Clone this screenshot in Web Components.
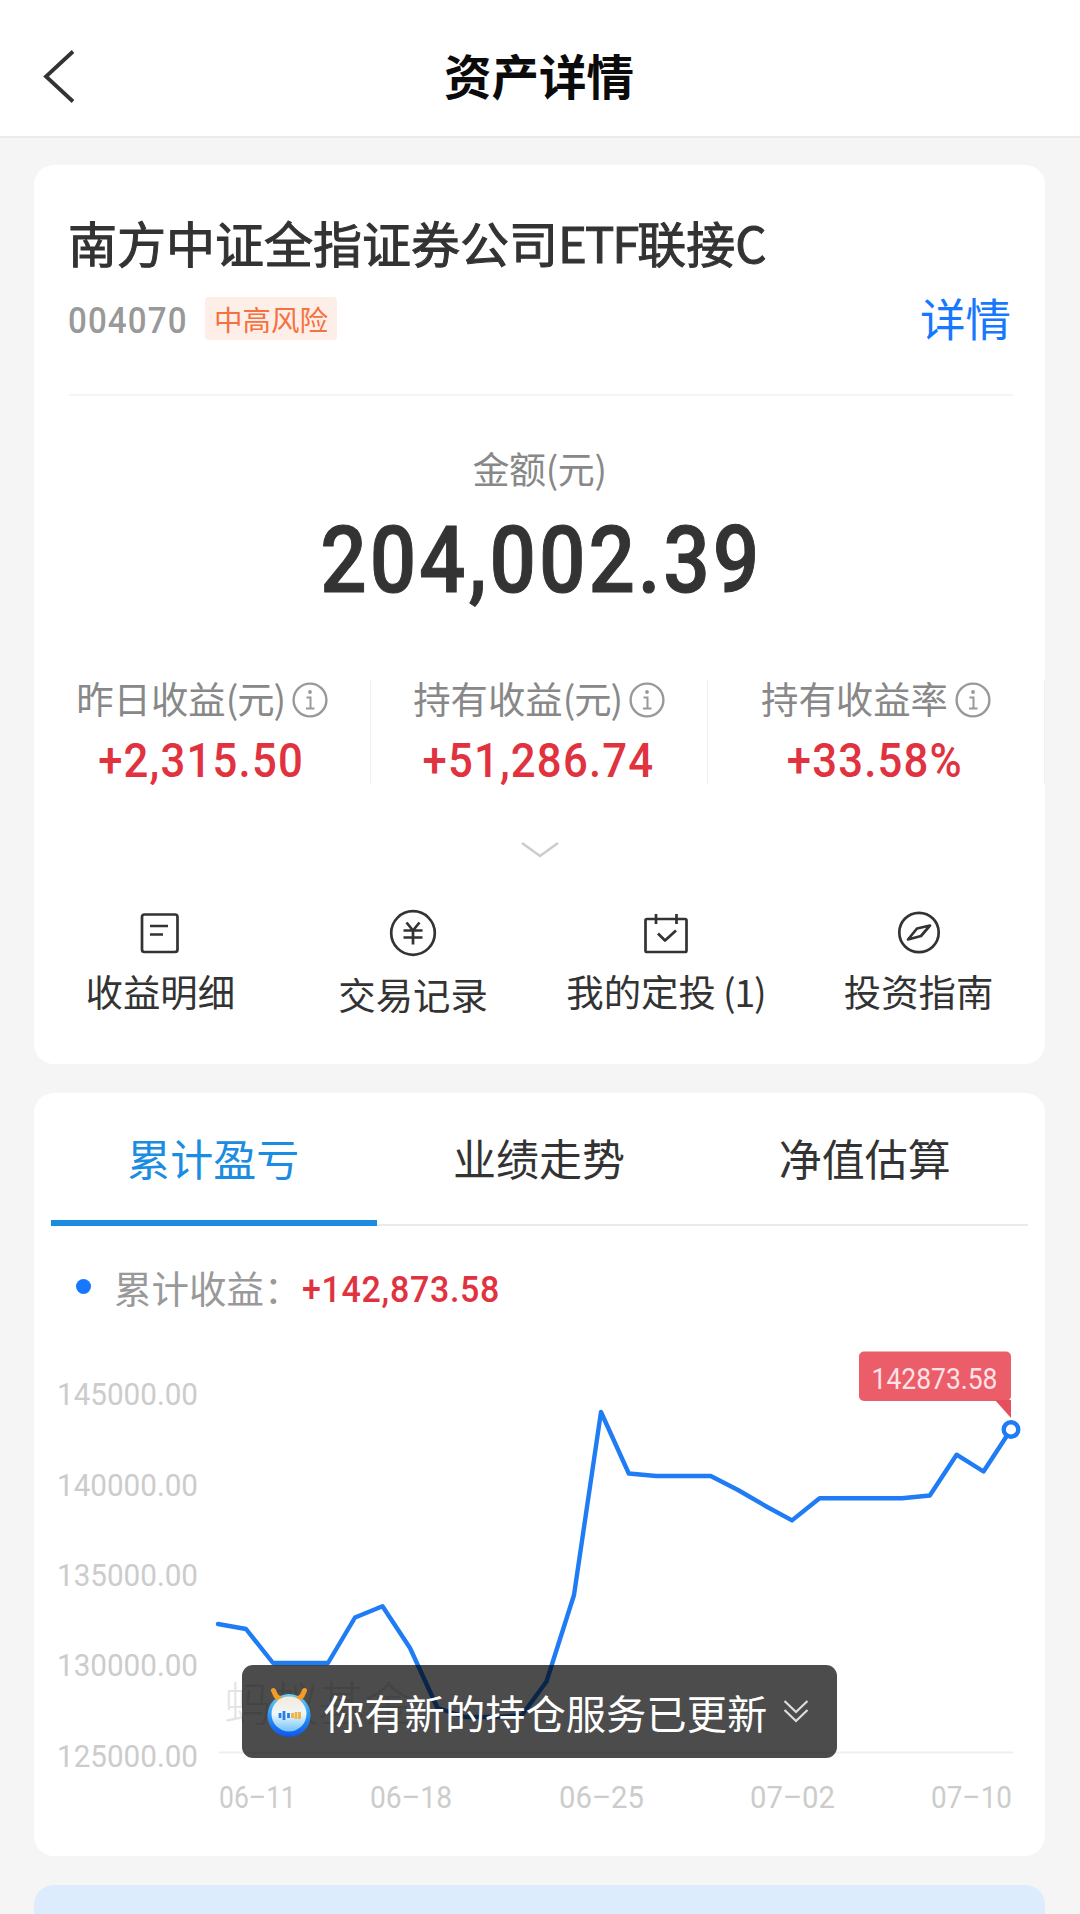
<!DOCTYPE html>
<html lang="zh-CN">
<head>
<meta charset="utf-8">
<title>资产详情</title>
<style>
html, body {
  margin: 0;
  background: #f5f5f5;
}
body {
  width: 1080px;
  height: 1914px;
  overflow: hidden;
  font-family: Roboto, "Noto Sans CJK SC", sans-serif;
  color: #333;
}
</style>
</head>
<body>
<asset-page></asset-page>

<script>
function define(name, html, setup) {
  const template = document.createElement("template");
  template.innerHTML = html;
  customElements.define(name, class extends HTMLElement {
    constructor() {
      super();
      this.attachShadow({ mode: "open" });
      this.shadowRoot.appendChild(template.content.cloneNode(true));
    }
    connectedCallback() {
      if (setup) setup(this, this.shadowRoot);
    }
  });
}

define("nav-bar", `
<style>
:host {
  display: grid;
  grid-template-columns: 120px 1fr 122px;
  align-items: center;
  box-sizing: border-box;
  height: 138px;
  padding-top: 17px;
  background: #fff;
  border-bottom: 2px solid #ebebeb;
}
svg { display: block; margin: 0 0 1px 39px; }
h1 {
  margin: 0 0 3px;
  font: 700 47.5px/70px "Noto Sans CJK SC", sans-serif;
  text-align: center;
  color: #0b0b0b;
}
</style>
<svg width="36" height="56" viewBox="0 0 36 56" fill="none" stroke="#333" stroke-width="3.8"><path d="M34 3.500 7 28.500l27 25"/></svg>
<h1><slot></slot></h1>
`);

define("white-card", `
<style>
:host {
  display: block;
  box-sizing: border-box;
  margin: 0 35px 29px 34px;
  border-radius: 20px;
  background: #fff;
  overflow: hidden;
}
</style>
<slot></slot>
`);

// Narrow figures: --squeeze is the horizontal scale, --track the space between them
define("num-text", `
<style>
:host {
  display: inline-block;
  font-family: Roboto, sans-serif;
  font-weight: 500;
  white-space: nowrap;
  letter-spacing: var(--track, .03em);
  margin-right: calc(-1 * var(--track, .03em));
  transform: scaleX(var(--squeeze, .91));
  transform-origin: var(--origin, center);
}
</style>
<slot></slot>
`);

define("fund-header", `
<style>
:host {
  display: block;
  margin: 0 32px 0 35px;
  height: 229px;
  border-bottom: 2px solid #f5f5f5;
}
h2 {
  margin: 0 0 0 -1px;
  padding-top: 42px;
  font: 400 49px/70px "Noto Sans CJK SC", sans-serif;
  -webkit-text-stroke: 1px #333;
  white-space: nowrap;
}
.row { display: flex; align-items: center; height: 82px; }
num-text { margin: 6px 0 0 -1px; font-size: 36px; color: #999; --track: 1.2px; --squeeze: .92; --origin: left; }
.tag {
  margin-left: 7px;
  height: 43px;
  width: 132px;
  border-radius: 4px;
  background: #feeee8;
  color: #f5713f;
  font: 400 28.5px/43px "Noto Sans CJK SC", sans-serif;
  text-align: center;
}
.more {
  margin: 0 2px 2px auto;
  color: #1677ff;
  font: 400 45.5px/66px "Noto Sans CJK SC", sans-serif;
}
</style>
<h2><slot name="name"></slot></h2>
<div class="row">
  <num-text><slot name="code"></slot></num-text>
  <span class="tag"><slot name="risk"></slot></span>
  <span class="more">详情</span>
</div>
`);

define("total-amount", `
<style>
:host { display: flex; flex-direction: column; align-items: center; height: 284px; }
.label {
  margin-top: 45px;
  font: 400 37px/54px "Noto Sans CJK SC", sans-serif;
  letter-spacing: -.4px;
  color: #888;
}
num-text {
  margin-top: 12px;
  font-size: 92px;
  line-height: 108px;
  -webkit-text-stroke: 1px #333;
  --squeeze: .89;
  --track: 3.2px;
}
</style>
<span class="label">金额(元)</span>
<num-text><slot></slot></num-text>
`);

define("profit-stat", `
<style>
:host {
  flex: 1;
  display: flex;
  flex-direction: column;
  align-items: center;
  box-sizing: border-box;
  height: 104px;
  border-right: 1px solid #f0f0f0;
}
.label {
  display: flex;
  align-items: center;
  gap: 7px;
  height: 42px;
  font: 400 37.4px/42px "Noto Sans CJK SC", sans-serif;
  color: #888;
  white-space: nowrap;
}
.name { margin-top: -3px; }
.label svg { margin-top: 1px; }
num-text { margin: 14px 2px 0 0; font-size: 48px; line-height: 56px; color: #e0323f; --track: 1.300px; }
</style>
<div class="label"><span class="name"><slot name="label"></slot></span>
  <svg width="36" height="36" viewBox="0 0 36 36" fill="none" stroke="#999" stroke-width="2.4">
    <circle cx="18" cy="18" r="16.4"/>
    <path d="M14.5 15.5h4v11M14 26.5h8.500" stroke-width="2"/>
    <circle cx="18" cy="10" r="1.900" fill="#999" stroke="none"/>
  </svg>
</div>
<num-text><slot></slot></num-text>
`);

const actionIcons = {
  detail: '<rect x="6" y="5.500" width="35.500" height="37.500" rx="2.500"/><path d="M14 17h18M14 25.500h13"/>',
  trade: '<circle cx="24" cy="24" r="21.800"/><path d="m17.500 13.500 6.500 8 6.500-8M14.500 21.500h19M14.500 28.500h19M24 21.500v14"/>',
  plan: '<rect x="3.500" y="10" width="41" height="33" rx="1.500"/><path d="M14 5v10M34.500 5v10M16 24.500l7 7L34 21.500"/>',
  guide: '<circle cx="24" cy="23.500" r="19.700"/><path d="M35 16.500 22 19.500 13 30.500 26 27z"/>',
};

define("quick-action", `
<style>
:host {
  flex: 1;
  display: flex;
  flex-direction: column;
  align-items: center;
  font: 400 37.400px/54px "Noto Sans CJK SC", sans-serif;
  white-space: nowrap;
}
svg { margin-bottom: var(--drop, 7px); }
</style>
<svg width="48" height="48" viewBox="0 0 48 48" fill="none" stroke="#333" stroke-width="2.700" stroke-linejoin="round"></svg>
<span><slot></slot></span>
`, (el, root) => {
  root.querySelector("svg").innerHTML = actionIcons[el.getAttribute("icon")];
});

define("tab-bar", `
<style>
:host {
  display: flex;
  margin: 0 17px;
  height: 131px;
  border-bottom: 2px solid #e8ebee;
}
::slotted(*) {
  flex: 1;
  box-sizing: border-box;
  height: 133px;
  padding: 32px 1px 0 0;
  text-align: center;
  font: 400 43px/64px "Noto Sans CJK SC", sans-serif;
}
::slotted([selected]) {
  color: #1a8ce2;
  border-bottom: 6px solid #1a8ce2;
}
</style>
<slot></slot>
`);

define("chart-legend", `
<style>
:host {
  display: flex;
  align-items: center;
  height: 54px;
  margin-top: 34px;
  padding-left: 42px;
  font: 400 37.500px/54px "Noto Sans CJK SC", sans-serif;
  color: #999;
}
i { width: 15px; height: 15px; margin: -2px 23px 0 0; border-radius: 50%; background: #1677ff; }
span { width: 188px; }
num-text { margin-top: 3px; font-size: 37.500px; color: #e0323f; --origin: left; --track: .8px; --squeeze: .905; }
</style>
<i></i><span><slot name="label"></slot></span><num-text><slot></slot></num-text>
`);

// Each point is [x, y] in the drawing's own pixels
const points = [
  [184, 310], [212, 315], [239, 349], [294, 349], [321, 303.500], [348.500, 292.300], [376, 334],
  [403.500, 394], [431, 403], [466, 403], [488, 401], [512.500, 367.500], [540, 281], [567, 98],
  [594.800, 159.500], [622, 162], [676.700, 162], [704, 176], [731, 191.700], [758, 206.400],
  [785.600, 184.300], [868, 184.300], [895.800, 181.500], [922.600, 140.700], [949.500, 157.500], [977, 115.500],
];
const yTicks = [
  ["145000.00", 91], ["140000.00", 181.500], ["135000.00", 272], ["130000.00", 362], ["125000.00", 453],
];
const xTicks = [
  ["06–11", 186, 75], ["06–18", 337, 80], ["06–25", 526, 83], ["07–02", 717, 83], ["07–10", 898, 79],
];

define("profit-chart", `
<style>
:host { display: block; }
svg { display: block; font: 400 32px Roboto, sans-serif; }
.tick { fill: #ccc; }
.mark { font: 300 47px "Noto Sans CJK SC", sans-serif; fill: #e4e4e4; }
.tip { font-size: 30px; fill: #ffe3e6; }
</style>
<svg width="1011" height="542" viewBox="0 0 1011 542">
  <path d="M185 438.500H979" stroke="#f0f0f0" stroke-width="2"/>
  <text class="mark" x="190" y="407">蚂蚁基金</text>
  <g class="tick"></g>
  <polyline fill="none" stroke="#1f7cf5" stroke-width="4.400" stroke-linejoin="round" stroke-linecap="round"/>
  <rect x="825" y="37.500" width="152" height="49.500" rx="5" fill="#eb5d69"/>
  <path d="M961 86h16v18z" fill="#e4505d"/>
  <text class="tip" x="837.500" y="74.500" textLength="126" lengthAdjust="spacingAndGlyphs">142873.58</text>
  <circle cx="977" cy="115.500" r="7.300" fill="#fff" stroke="#1f7cf5" stroke-width="4.400"/>
</svg>
`, (el, root) => {
  root.querySelector("polyline").setAttribute("points", points.join(" "));
  const tick = (label, x, y, width) =>
    `<text x="${x}" y="${y}" textLength="${width}" lengthAdjust="spacingAndGlyphs">${label}</text>`;
  root.querySelector(".tick").innerHTML =
    yTicks.map(([label, y]) => tick(label, 23, y, 141)).join("") +
    xTicks.map(([label, x, width]) => tick(label, x - 1, 494, width + 2)).join("");
});

define("update-toast", `
<style>
:host {
  position: absolute;
  left: 242px;
  top: 1664.500px;
  display: flex;
  align-items: center;
  box-sizing: border-box;
  width: 595px;
  height: 93.500px;
  padding-left: 21px;
  border-radius: 11px;
  background: rgba(0, 0, 0, .7);
  color: #fff;
  font: 400 40.300px/60px "Noto Sans CJK SC", sans-serif;
  white-space: nowrap;
}
.text { margin: 1px 16px 0 9px; }
.more { margin-top: 2px; }
</style>
<svg width="52" height="54" viewBox="0 0 52 54">
  <defs>
    <linearGradient id="ring" x2="0" y2="1"><stop offset="0" stop-color="#6cd0f2"/><stop offset=".45" stop-color="#2f9df5"/><stop offset="1" stop-color="#0d55ea"/></linearGradient>
    <linearGradient id="face" x2="0" y2="1"><stop offset="0" stop-color="#f5ead9"/><stop offset=".5" stop-color="#eef6fb"/><stop offset="1" stop-color="#6fc3f8"/></linearGradient>
  </defs>
  <circle cx="26" cy="31.500" r="21.500" fill="url(#ring)"/>
  <path d="M10.500 6.500 13 12l5 4M41.500 6.500 39 12l-5 4" fill="none" stroke="#f39a28" stroke-width="5" stroke-linecap="round" stroke-linejoin="round"/>
  <circle cx="26" cy="30" r="17.500" fill="url(#face)"/>
  <path d="M17 29v5M21 27v9M25.500 29v5" stroke="#287de6" stroke-width="2.800"/>
  <path d="M29.500 29v5M33 28v7M36.500 28v7" stroke="#eeb340" stroke-width="2.800"/>
</svg>
<span class="text"><slot></slot></span>
<svg class="more" width="26" height="26" viewBox="0 0 26 26" fill="none" stroke="#ddd" stroke-width="2.200"><path d="m1.500 2 11.500 11L24.500 2M1.500 11 13 22l11.500-11"/></svg>
`);

define("asset-page", `
<style>
:host { display: block; position: relative; height: 1914px; overflow: hidden; }
main { padding-top: 27px; }
.assets { height: 899px; }
.trend { height: 763px; }
.next { height: 120px; background: #dcecfc; }
.stats { display: flex; }
.fold { display: block; margin: 57px auto 50px; }
.actions { display: flex; }
.latin { letter-spacing: -2px; }
.tight { letter-spacing: -1.200px; }
</style>
<nav-bar>资产详情</nav-bar>
<main>
  <white-card class="assets">
    <fund-header>
      <span slot="name">南方中证全指证券公司<span class="latin">ETF</span>联接<span class="latin">C</span></span>
      <span slot="code">004070</span>
      <span slot="risk">中高风险</span>
    </fund-header>
    <total-amount>204,002.39</total-amount>
    <div class="stats">
      <profit-stat><span slot="label">昨日收益<span class="tight">(元)</span></span>+2,315.50</profit-stat>
      <profit-stat><span slot="label">持有收益<span class="tight">(元)</span></span>+51,286.74</profit-stat>
      <profit-stat><span slot="label">持有收益率</span>+33.58%</profit-stat>
    </div>
    <svg class="fold" width="40" height="18" viewBox="0 0 40 18" fill="none" stroke="#ccc" stroke-width="2.500"><path d="m2 2 18 13L38 2"/></svg>
    <div class="actions">
      <quick-action icon="detail">收益明细</quick-action>
      <quick-action icon="trade" style="--drop: 10px">交易记录</quick-action>
      <quick-action icon="plan">我的定投<span class="tight"> (1)</span></quick-action>
      <quick-action icon="guide">投资指南</quick-action>
    </div>
  </white-card>
  <white-card class="trend">
    <tab-bar>
      <span selected>累计盈亏</span>
      <span>业绩走势</span>
      <span>净值估算</span>
    </tab-bar>
    <chart-legend><span slot="label">累计收益：</span>+142,873.58</chart-legend>
    <profit-chart></profit-chart>
  </white-card>
  <white-card class="next"></white-card>
</main>
<update-toast>你有新的持仓服务已更新</update-toast>
`);
</script>
</body>
</html>
